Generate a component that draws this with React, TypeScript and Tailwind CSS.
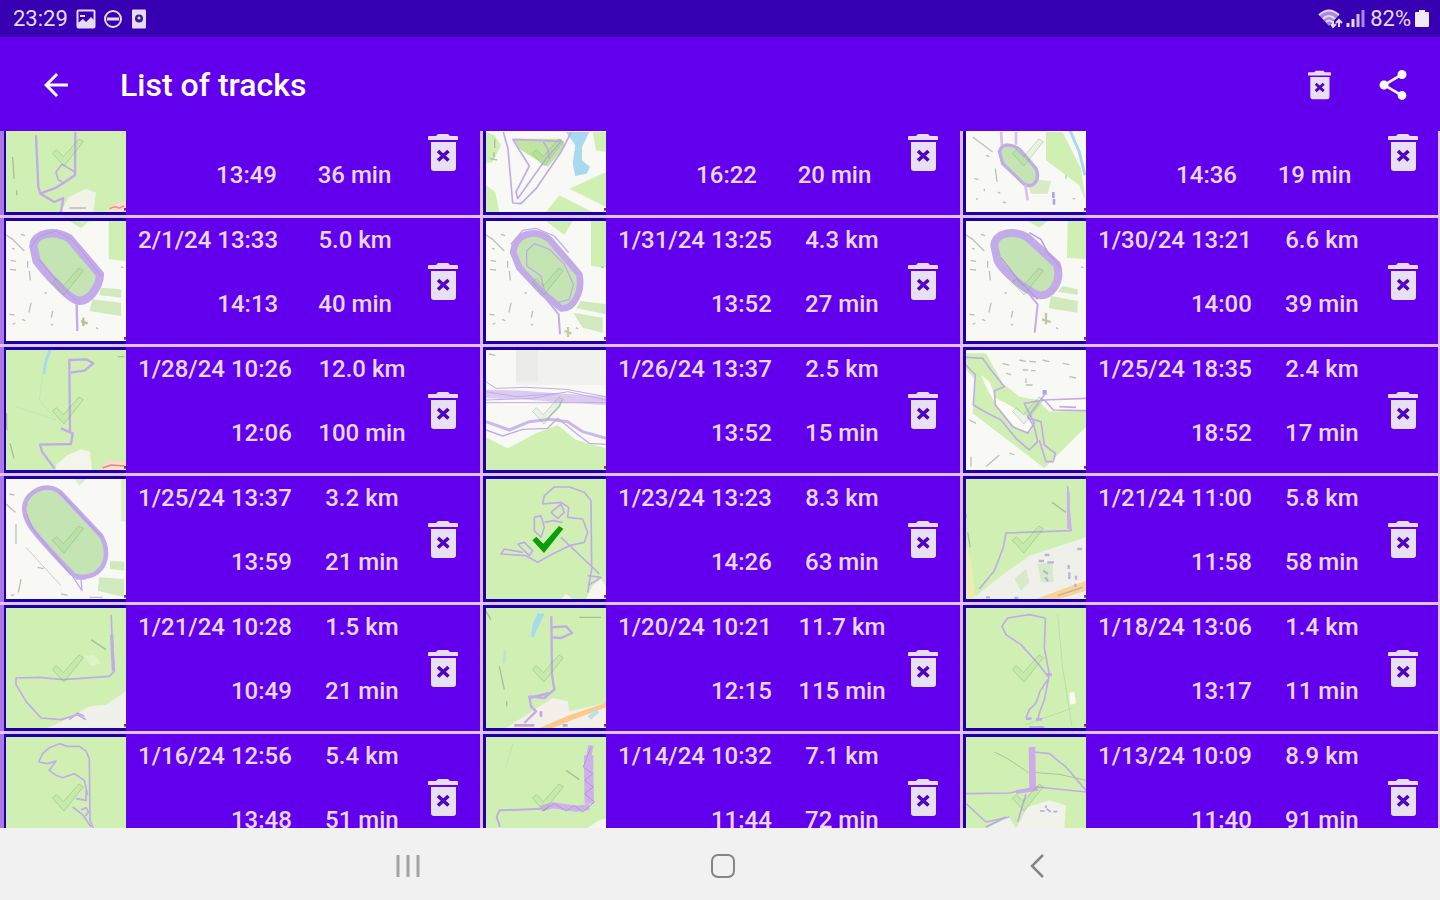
import React from 'react'
import { MdArrowBack, MdShare } from 'react-icons/md'

type Patch = { d: string; fill: string }
type Line = { d: string; w?: number; color?: string; fill?: string }
type TrackMap = { land: string; patches?: Patch[]; marks?: string; lines: Line[] }
type Track = {
    start?: string
    end: string
    distance?: string
    duration: string
    selected?: boolean
    map: TrackMap
}

const GREEN = '#cff0b2'
const PAPER = '#f8f9f4'
const FIELD = '#c4e5b3'
const WATER = '#a9d9ee'
const ROAD = '#f8d49a'

const stadiumMarks =
    'M0 42 L20 55 L55 90 M45 40l12 4 M18 82l8 2 M14 118l16 3 M12 145l18 2 M65 120v20 M70 150l3 28 M75 245l-6 30 M10 280l15 2 M48 295l10 4 M20 310l8-4 M115 215l8 2 M140 270l-4 20 M135 310l6 2 M270 320l6 4 M345 138l8 2'

const tracks: Track[] = [
    {
        end: '13:49',
        duration: '36 min',
        map: {
            land: GREEN,
            patches: [
                { d: 'M170 350 L188 315 L240 290 L270 302 L262 360 H165Z', fill: '#f1f2e8' },
                { d: 'M300 360 L325 335 L360 328 V360Z', fill: '#f9dfcf' },
            ],
            marks: 'M20 195 L24 260 M32 295v15 M190 348h50',
            lines: [
                { d: 'M90 130 L97 285 L103 305 L150 287 L207 250 L208 120', w: 7 },
                { d: 'M207 240 L168 217 L150 240 L156 262 L175 275' },
                { d: 'M103 305 L145 330 L172 318 L165 360', w: 7 },
                { d: 'M310 350 L325 344 L340 348 L355 342', color: '#e29a8a' },
            ],
        },
    },
    {
        end: '16:22',
        duration: '20 min',
        map: {
            land: PAPER,
            patches: [
                { d: 'M0 120 L25 130 L45 160 L20 210 L0 215Z M0 280 L28 300 L40 360 H0Z', fill: GREEN },
                { d: 'M80 140 L225 140 L240 160 L185 225 L100 170Z', fill: '#bfe5a0' },
                { d: 'M240 120 L310 120 L288 165 L288 205 L312 225 L302 245 L268 252 L260 215 L268 160Z', fill: WATER },
                { d: 'M320 120 H360 V180 L330 175Z M250 290 L360 240 V345Z M180 360 L220 310 L320 360Z', fill: GREEN },
            ],
            marks: 'M26 140v28 M24 180v16 M12 200l22 4',
            lines: [
                { d: 'M52 120 L66 170 L80 333 L105 335 L150 290 L225 180 L255 122' },
                { d: 'M80 142 L225 148 L180 200 L95 320 L90 300 L130 222 L80 142' },
                { d: 'M172 150 L185 170 L190 200' },
            ],
        },
    },
    {
        end: '14:36',
        duration: '19 min',
        map: {
            land: PAPER,
            patches: [
                { d: 'M240 120 H290 L345 230 L360 330 L340 280 L240 205Z', fill: GREEN },
                { d: 'M210 262 L255 268 L245 305 L195 305 L185 280Z', fill: '#d9eac4' },
            ],
            marks:
                'M20 135 L80 180 M88 230l5 40 M60 190l10 4 M25 260l12 2 M55 290v8 M30 320l6 2 M95 300l8 4 M110 330l10 2 M300 250v10 M320 320h8',
            lines: [
                { d: 'M310 110 L340 180 L357 250', w: 9, color: WATER },
                { d: 'M100 178 C108 150 145 155 168 180 L210 230 C225 265 200 290 175 277 L110 215Z', w: 10, fill: FIELD },
                { d: 'M105 120 L108 160 M150 120 L150 158 M178 278 L185 325', w: 8, color: '#d7bdf3' },
                { d: 'M262 300v18 M264 320v18', color: '#aaa6ee', w: 8 },
            ],
        },
    },
    {
        start: '2/1/24 13:33',
        end: '14:13',
        distance: '5.0 km',
        duration: '40 min',
        map: {
            land: PAPER,
            patches: [
                { d: 'M190 0 H250 L225 22Z M308 0 H360 V120 L308 115Z', fill: GREEN },
                { d: 'M260 235 L345 245 V285 L250 270Z M285 200 L345 205 V230 L280 222Z', fill: '#d1eabd' },
            ],
            marks: stadiumMarks,
            lines: [
                { d: 'M82 75 C85 35 145 25 190 52 L282 160 C280 200 245 250 210 237 C180 225 110 145 92 120Z', w: 25, fill: FIELD },
                { d: 'M74 80 L98 46 L150 30 L205 62 L285 165 M95 110 L160 190 L220 248', w: 3, color: '#b897e5' },
                { d: 'M212 250 L214 330', w: 7 },
                { d: 'M225 300l20 8 M232 290v25', w: 7, color: '#b9bf8b' },
            ],
        },
    },
    {
        start: '1/31/24 13:25',
        end: '13:52',
        distance: '4.3 km',
        duration: '27 min',
        map: {
            land: PAPER,
            patches: [
                { d: 'M180 0 H260 L235 42Z M315 0 H360 V140 L315 135Z', fill: GREEN },
                { d: 'M285 240 L360 250 V280 L270 262Z M262 275 L350 290 V335 L290 320Z', fill: '#d1eabd' },
            ],
            marks: stadiumMarks,
            lines: [
                { d: 'M82 95 C85 40 145 20 190 55 L280 160 C290 210 265 265 225 262 L170 215 L100 140Z', w: 20, fill: FIELD },
                { d: 'M74 70 L110 28 L150 22 L205 45 L248 95', w: 4 },
                { d: 'M178 220 L165 165 L122 135 L122 90 L145 68 L190 85 L235 130 L262 190 L250 235 L215 245 L178 220', w: 4 },
                { d: 'M170 220 L218 280 L222 340', w: 6 },
                { d: 'M235 330l22 8 M246 318v30', w: 7, color: '#c8cda4' },
            ],
        },
    },
    {
        start: '1/30/24 13:21',
        end: '14:00',
        distance: '6.6 km',
        duration: '39 min',
        map: {
            land: PAPER,
            patches: [
                { d: 'M185 0 H245 L220 20Z M305 0 H360 V115 L303 110Z', fill: GREEN },
                { d: 'M255 225 L335 240 V275 L248 262Z M290 195 L335 205 V222 L275 212Z', fill: '#d1eabd' },
            ],
            marks: stadiumMarks,
            lines: [
                { d: 'M85 75 C85 35 145 25 185 50 L272 130 C290 180 255 230 218 222 C180 210 110 150 95 120Z', w: 24, fill: FIELD },
                { d: 'M190 35 L225 55 L245 95 L285 140 M105 110 L160 180 L215 235', w: 4, color: '#b897e5' },
                { d: 'M190 220 L215 250 L206 335', w: 6 },
                { d: 'M228 295l26 8 M240 275v35', w: 7, color: '#c1c99b' },
            ],
        },
    },
    {
        start: '1/28/24 10:26',
        end: '12:06',
        distance: '12.0 km',
        duration: '100 min',
        map: {
            land: GREEN,
            patches: [
                { d: 'M150 345 L185 315 L225 298 L252 305 L258 360 H150Z', fill: '#f3f4ea' },
                { d: 'M280 360 L310 330 L360 335 V360Z', fill: '#fadccb' },
            ],
            marks: 'M2 190v50 M12 280l12 45 M335 20h20',
            lines: [
                { d: 'M132 0 L118 40 L114 72', w: 9, color: WATER },
                { d: 'M110 70 L100 150 L150 210 L30 170', w: 2, color: '#bfe0b8' },
                { d: 'M192 250 L190 30 L240 28 L262 40 L235 62 L195 68', w: 7 },
                { d: 'M165 235 L200 250 L195 282 L102 284 L108 305 L145 355', w: 7 },
                { d: 'M290 354 L315 345 L355 348', color: '#d98e80' },
            ],
        },
    },
    {
        start: '1/26/24 13:37',
        end: '13:52',
        distance: '2.5 km',
        duration: '15 min',
        map: {
            land: PAPER,
            patches: [
                { d: 'M90 0 H360 V105 H90Z', fill: '#f1f1ee' },
                { d: 'M90 0 H155 V95 H90Z', fill: '#ebebe8' },
                { d: 'M0 262 L65 295 L150 250 L215 225 L270 270 L360 295 V360 H0Z', fill: GREEN },
            ],
            marks: 'M8 12l20 4',
            lines: [
                { d: 'M0 132 L110 135 L200 142 L360 152', w: 26, color: '#dccbf0' },
                { d: 'M0 95 L30 115 L120 112 L240 118 L360 140 M0 150 L140 145 L245 125 L360 150 M0 158 H360 M0 125 L90 140 L220 130', w: 3 },
                { d: 'M0 215 L70 240 L130 215 L190 208 L245 215 L290 245 L360 265', w: 9, color: '#ccb6ee' },
                { d: 'M0 240 L50 258 L110 238 L185 235 L215 205 L270 250 L310 280 L360 283', w: 4 },
                { d: 'M180 210 L220 170 L228 150', w: 4, color: '#b5bfc4' },
            ],
        },
    },
    {
        start: '1/25/24 18:35',
        end: '18:52',
        distance: '2.4 km',
        duration: '17 min',
        map: {
            land: PAPER,
            patches: [
                { d: 'M0 10 L60 10 L110 100 L160 140 L215 150 L250 185 L360 180 V230 L235 355 L20 190 L30 90 L0 60Z', fill: GREEN },
                { d: 'M45 75 L70 95 L90 145 L130 165 L200 210 L195 245 L150 235 L95 170 L65 120Z', fill: '#fbfbf8' },
                { d: 'M245 150 L360 148 V180 L270 180Z', fill: '#fbfbf8' },
            ],
            marks:
                'M160 30l20 4 M190 34l20 2 M170 60h16 M195 62h14 M180 85v14 M230 30l20 5 M110 40l20 6 M290 40l20 4 M310 80l20 4 M180 105h20 M120 70l15 4 M60 350l40-35 M10 210l20 10 M15 320v30 M130 310l15 4',
            lines: [
                { d: 'M0 22 L50 25 L75 60 L115 110 L85 122 L88 165 L140 230 L185 250 L205 220 L175 160 L235 150 L360 145', w: 5 },
                { d: 'M0 45 L28 75 L22 165 L65 190 L105 210 L150 265 L190 300 L215 275 L205 230 L185 200 L235 135', w: 5 },
                { d: 'M190 205 L225 215 L235 285 L268 310 L262 335 L240 335 L220 270', w: 5 },
                { d: 'M235 150 L262 180 L360 182 M280 170 L330 172', w: 5 },
                { d: 'M236 120v14', w: 12, color: '#aaa0ec' },
            ],
        },
    },
    {
        start: '1/25/24 13:37',
        end: '13:59',
        distance: '3.2 km',
        duration: '21 min',
        map: {
            land: PAPER,
            patches: [
                { d: 'M205 0 H240 L220 20Z M345 0 H360 V130 L345 125Z', fill: '#dcefcc' },
                { d: 'M280 295 L355 300 V355 L275 335Z M312 245 L355 248 V275 L312 270Z', fill: '#d1eabd' },
            ],
            marks:
                'M0 75 L28 100 M30 135v60 M10 45l15 3 M95 265l18 4 M45 300l-8 40 M15 350l10-4 M165 345l20 4 M250 355h40',
            lines: [
                { d: 'M60 205 L165 320', w: 3, color: '#c9ccc6' },
                { d: 'M55 85 C60 35 125 5 165 42 L285 170 C325 240 280 310 205 290 C175 260 100 180 75 145 C58 120 54 105 55 85Z', w: 14, fill: FIELD },
                { d: 'M62 105 L80 150 L195 288 M160 38 L288 175', w: 3, color: '#b493e6' },
                { d: 'M200 292 L228 335 L225 300 M210 300 L240 300', w: 4 },
            ],
        },
    },
    {
        start: '1/23/24 13:23',
        end: '14:26',
        distance: '8.3 km',
        duration: '63 min',
        selected: true,
        map: {
            land: GREEN,
            patches: [{ d: 'M300 360 L320 320 L345 300 L360 320 V360Z M225 360 L240 345 L260 360Z', fill: '#f6f6ee' }],
            lines: [
                { d: 'M170 75 L175 50 L205 24 L250 24 L295 40 L315 65 L317 270 L305 340 M170 75 L225 70 L248 85 L245 115 L290 120 L305 160 L295 190 L250 200 L200 225 L155 250 L120 230 L45 225 L55 210 L110 220', w: 5 },
                { d: 'M195 100 L225 75 L235 100 L215 118 L195 100 M145 115 L165 110 L175 145 L165 175 L145 155 L145 115 M175 130 L200 125 L230 130', w: 5 },
                { d: 'M95 195 L115 190 L140 215 L130 230 L95 195 M225 175 L325 270 L340 285 M305 290 L345 295 L305 320', w: 5 },
            ],
        },
    },
    {
        start: '1/21/24 11:00',
        end: '11:58',
        distance: '5.8 km',
        duration: '58 min',
        map: {
            land: GREEN,
            patches: [
                { d: 'M0 360 L10 345 L30 350 L100 295 L190 230 L360 175 V360Z', fill: '#eff0e9' },
                { d: 'M145 300 L180 270 L190 310 L165 335Z M215 255 L260 250 L262 310 L225 310Z', fill: '#d6e9c8' },
                { d: 'M210 360 L290 330 L360 305 V335 L280 360Z', fill: ROAD },
                { d: 'M0 200 L15 240 L28 360 H0Z', fill: '#eceeb0' },
            ],
            marks: 'M0 105v12 M5 160l8 45 M258 70 L300 100 M275 350 L350 325',
            lines: [
                { d: 'M305 20 L308 80 L315 155 L120 162 L112 205 L85 275 L40 330' },
                { d: 'M307 40 L308 150', w: 9, color: '#cdb0ea' },
                { d: 'M236 228h14 M218 246h16 M244 250h20 M334 210h14 M308 258v12 M310 280v20 M232 275l14 10 M238 295l8 12 M330 290v12 M328 314v10 M60 355h12 M145 357h12', color: '#b5b4e0', w: 7 },
            ],
        },
    },
    {
        start: '1/21/24 10:28',
        end: '10:49',
        distance: '1.5 km',
        duration: '21 min',
        map: {
            land: GREEN,
            patches: [
                { d: 'M125 360 L200 325 L250 295 L300 290 L360 250 V360Z', fill: '#f0f1ea' },
                { d: 'M235 145 L265 140 L285 165 L255 175Z', fill: '#dff2c8' },
            ],
            marks: 'M255 95 L300 125',
            lines: [
                { d: 'M316 20 L318 90 L325 190 L310 205 L170 215 L100 208 L30 210 L30 230 L60 280 L105 330 L165 335 L215 320 L240 335' },
                { d: 'M317 80 L322 190', w: 10 },
                { d: 'M190 335 L215 315 L235 325' },
            ],
        },
    },
    {
        start: '1/20/24 10:21',
        end: '12:15',
        distance: '11.7 km',
        duration: '115 min',
        map: {
            land: GREEN,
            patches: [
                { d: 'M155 15 L175 18 L155 60 L142 90 L135 85 L140 50Z', fill: WATER },
                { d: 'M60 360 L130 315 L200 270 L245 280 L250 310 L360 285 V360Z', fill: '#f4efe9' },
                { d: 'M160 360 L250 322 L360 284 V298 L260 335 L200 360Z', fill: '#fbc98a' },
            ],
            marks: 'M40 175 L55 245 M62 280v15 M280 28h65 M0 10l15 25',
            lines: [
                { d: 'M57 125l-2 40', color: '#bfe3cf', w: 9 },
                { d: 'M196 25 L198 200 L205 245 L175 270 L130 265 L135 295 L150 310 L115 345', w: 7 },
                { d: 'M196 58 L240 55 L258 75 L225 90 L196 88 M130 270 L190 255', w: 7 },
                { d: 'M165 310v16 M85 352h60 M230 352h15', color: '#c5a6dc', w: 8 },
                { d: 'M310 330 L335 308', color: '#b9dfe8', w: 14 },
            ],
        },
    },
    {
        start: '1/18/24 13:06',
        end: '13:17',
        distance: '1.4 km',
        duration: '11 min',
        map: {
            land: GREEN,
            patches: [{ d: 'M310 255 L325 252 L330 285 L312 290Z', fill: '#fbfbf6' }],
            lines: [
                { d: 'M275 20 L290 180 L318 355 M180 350 L320 300', w: 3, color: '#bddcb0' },
                { d: 'M238 30 L190 20 L125 30 L108 55 L120 80 L165 110 L210 160 L250 210 M238 30 L235 120 L250 200 L242 240 L235 275 L222 310 L215 335 M180 330 L190 305 L210 285 L222 250 L245 215' },
                { d: 'M240 200h18 M180 332h16 M210 334h18 M190 358h45', w: 8 },
            ],
        },
    },
    {
        start: '1/16/24 12:56',
        end: '13:48',
        distance: '5.4 km',
        duration: '51 min',
        map: {
            land: GREEN,
            lines: [
                { d: 'M98 75 L110 50 L130 32 L160 20 L185 28 L220 28 L240 42 L250 65 L252 250 L262 275 M98 75 L125 80 L150 72 L130 100 L150 115 L170 122 L205 110 L235 130 L245 175' },
                { d: 'M200 210 L232 235 L255 270 M225 218 L240 212 L248 225 L238 238 M210 185 L240 190 L240 160', w: 5 },
            ],
        },
    },
    {
        start: '1/14/24 10:32',
        end: '11:44',
        distance: '7.1 km',
        duration: '72 min',
        map: {
            land: GREEN,
            patches: [{ d: 'M300 275 L340 250 L360 245 V290 H300Z', fill: '#f4f5ec' }],
            marks: 'M240 100 L280 128',
            lines: [
                { d: 'M60 90 L80 20', w: 2, color: '#bddcb0' },
                { d: 'M315 25 L308 60', w: 16, color: '#cfb0ec' },
                { d: 'M308 55 L308 100 L310 200', w: 28, color: '#cfb0ec' },
                { d: 'M310 210 L270 215 L200 205 L165 215', w: 18, color: '#cfb0ec' },
                { d: 'M315 30 L292 90 L320 110 L296 130 L322 150 L296 170 L325 195 L290 225 L265 205 L240 222 L205 200 L170 222', w: 3, color: '#b892e4' },
                { d: 'M165 215 L100 218 L40 220 L32 240 L42 270', w: 6 },
            ],
        },
    },
    {
        start: '1/13/24 10:09',
        end: '11:40',
        distance: '8.9 km',
        duration: '91 min',
        map: {
            land: GREEN,
            patches: [{ d: 'M150 275 L185 210 L250 190 L300 205 L295 275Z M60 275 L130 240 L150 275Z', fill: '#f1f2e9' }],
            lines: [
                { d: 'M85 45 L125 65 L185 105 L280 112 L360 130', w: 3, color: '#a9c3a4' },
                { d: 'M198 30 L200 160', w: 20, color: '#cfabe9' },
                { d: 'M150 165 L215 155', w: 12, color: '#cfabe9' },
                { d: 'M205 45 L250 50 L300 90 L360 160 M360 165 L215 150 L130 168 L0 170 M0 200 L60 255 L130 240 M180 170 L155 255' },
                { d: 'M222 222h14 M242 215l12 10 M262 224h12 M240 205v8 M60 270 L120 240', color: '#b9a9df' },
            ],
        },
    },
]

const CHECK = 'M139 184 L151 173 L172 194 L219 141 L232 149 L174 222Z'

const MapThumb = ({ map, selected }: { map: TrackMap; selected?: boolean }) => (
    <svg viewBox="0 0 360 360" className="block h-[120px] w-[120px]" aria-hidden="true">
        <rect width="360" height="360" fill={map.land} />
        {map.patches?.map((patch, index) => (
            <path key={index} d={patch.d} fill={patch.fill} />
        ))}
        {map.marks && <path d={map.marks} fill="none" stroke="#8d948a" strokeWidth="4" opacity="0.55" />}
        {map.lines.map((line, index) => (
            <path
                key={index}
                d={line.d}
                fill={line.fill ?? 'none'}
                stroke={line.color ?? '#c3abea'}
                strokeWidth={line.w ?? 5}
                strokeLinejoin="round"
            />
        ))}
        {selected ? (
            <path d={CHECK} fill="#0a9e0a" />
        ) : (
            <path d={CHECK} fill="#8cc880" fillOpacity="0.15" stroke="#5c9c58" strokeOpacity="0.3" strokeWidth="3" />
        )}
        <rect x="354" y="348" width="6" height="8" fill="#8a2a66" />
    </svg>
)

const TrashIcon = ({ className }: { className: string }) => (
    <svg viewBox="0 0 30 37" className={className} aria-hidden="true">
        <path d="M8 2 L10 0 H20 L22 2 H29 Q30 2 30 3 V6 H0 V3 Q0 2 1 2Z" fill="#e9dcfa" />
        <path d="M3 8 H28 V34 Q28 37 25 37 H6 Q3 37 3 34Z" fill="#e6e0f2" />
        <path d="M10 17 L20.500 26.500 M20.500 17 L10 26.500" stroke="#5200c8" strokeWidth="3.600" />
    </svg>
)

const StatusBar = () => (
    <div className="flex h-[37px] shrink-0 items-center justify-between bg-[#3700b3] pt-px pr-[11px] pl-[13px] text-[22px] leading-6 text-[#e6dcfa]">
        <div className="flex items-center">
            <span>23:29</span>
            <svg viewBox="0 0 20 20" className="ml-2 h-5 w-5" aria-hidden="true">
                <rect x="1.500" y="1.500" width="17" height="17" rx="1" fill="none" stroke="#e6dcfa" strokeWidth="2" />
                <path d="M2 18 V14 L7 10 L10 13 L15 8 L18 11 V18Z" fill="#e6dcfa" />
                <path d="M4 7h5" stroke="#e6dcfa" strokeWidth="2" />
            </svg>
            <svg viewBox="0 0 20 20" className="ml-[7px] h-5 w-5" aria-hidden="true">
                <circle cx="10" cy="10" r="8" fill="none" stroke="#e6dcfa" strokeWidth="2" />
                <path d="M4 10h12" stroke="#e6dcfa" strokeWidth="3" />
            </svg>
            <svg viewBox="0 0 16 20" className="ml-2 h-5 w-4" aria-hidden="true">
                <rect x="1" y="0.500" width="14" height="19" rx="1" fill="#e6dcfa" />
                <circle cx="8" cy="9.500" r="4" fill="#3a1a9a" />
                <circle cx="8" cy="9" r="1.500" fill="#e6dcfa" />
            </svg>
        </div>
        <div className="flex items-center">
            <svg viewBox="0 0 26 20" className="h-5 w-[26px]" aria-hidden="true">
                <path d="M1 6 Q11 -3 21 6 L11 17Z" fill="#a68be0" />
                <path d="M1 6 Q11 -3 21 6 M5 10 Q11 4 17 10 M8 13 Q11 10 14 13" fill="none" stroke="#e6dcfa" strokeWidth="2" />
                <path d="M15 18 V12 M13 15 L15 18 L18 15 M21 11 V18 M18 14 L21 11 L24 14" fill="none" stroke="#e6dcfa" strokeWidth="2" />
            </svg>
            <svg viewBox="0 0 20 20" className="ml-[2px] h-5 w-5" aria-hidden="true">
                <path d="M2 18v-4 M7 18v-8" stroke="#e6dcfa" strokeWidth="3" />
                <path d="M12 18V5" stroke="#cdbcf0" strokeWidth="3" />
                <path d="M17 18V1" stroke="#a68be0" strokeWidth="3" />
            </svg>
            <span className="ml-1">82%</span>
            <svg viewBox="0 0 14 20" className="ml-1 h-5 w-[14px]" aria-hidden="true">
                <path d="M4 1h6v2h3q1 0 1 1v13q0 1-1 1H1q-1 0-1-1V4q0-1 1-1h3z" fill="#f1eafc" />
            </svg>
        </div>
    </div>
)

const TrackCell = ({ track, index }: { track: Track; index: number }) => {
    const column = index % 3
    return (
        <li className={`flex h-[129px] border-t-[3px] border-[#e2c2ff] ${column === 2 ? 'border-r-2' : ''}`}>
            <div className={`w-[126px] shrink-0 ${column === 0 ? 'border-l-[4px] border-[#ab78e4]' : 'border-l-[3px] border-[#dcb8ff]'}`}>
                <div className="flex h-full items-center justify-end bg-[#1c00a6]">
                    <MapThumb map={track.map} selected={track.selected} />
                </div>
            </div>
            <div className="ml-3 flex min-w-[139px] flex-col justify-end gap-8 pb-6 text-right">
                {track.start && <span>{track.start}</span>}
                <span>{track.end}</span>
            </div>
            <div className="ml-1 flex flex-1 flex-col justify-end gap-8 pb-6 text-center">
                {track.distance && <span>{track.distance}</span>}
                <span>{track.duration}</span>
            </div>
            <button
                type="button"
                aria-label="Delete track"
                className={`flex shrink-0 items-center ${column === 2 ? 'mr-5' : 'mr-[22px]'}`}
            >
                <TrashIcon className="h-[37px] w-[30px]" />
            </button>
        </li>
    )
}

const App = () => {
    return (
        <div className="flex h-screen flex-col overflow-hidden bg-[#6200ee] font-['Roboto',sans-serif]">
            <StatusBar />
            <header className="flex h-[94px] shrink-0 items-center pt-0.5 pr-[29px] pl-[38px] text-white">
                <button type="button" aria-label="Back">
                    <MdArrowBack size={36} />
                </button>
                <h1 className="ml-[46px] flex-1 text-[32px] leading-9 font-medium">List of tracks</h1>
                <button type="button" aria-label="Delete all tracks">
                    <TrashIcon className="h-[30px] w-[23px]" />
                </button>
                <button type="button" aria-label="Share" className="ml-11">
                    <MdShare size={36} />
                </button>
            </header>

            <main className="min-h-0 flex-1 overflow-hidden">
                <ul className="-mt-[45px] grid grid-cols-3 text-[24px] leading-8 font-medium text-[#e8d8ff]">
                    {tracks.map((track, index) => (
                        <TrackCell key={index} track={track} index={index} />
                    ))}
                </ul>
            </main>

            <nav className="flex h-[72px] shrink-0 items-center justify-center gap-[291px] bg-[#f1f1f1] pt-1 pl-[6px] text-[#858585]">
                <button type="button" aria-label="Recent apps">
                    <svg viewBox="0 0 24 24" className="h-6 w-6" fill="none" stroke="#a3a3a3" strokeWidth="3">
                        <path d="M2 1v22 M12 1v22 M22 1v22" />
                    </svg>
                </button>
                <button type="button" aria-label="Home">
                    <svg viewBox="0 0 24 24" className="h-6 w-6" fill="none" stroke="currentColor" strokeWidth="2">
                        <rect x="1" y="1" width="22" height="22" rx="6" />
                    </svg>
                </button>
                <button type="button" aria-label="Back to previous app">
                    <svg viewBox="0 0 24 24" className="h-6 w-6" fill="none" stroke="currentColor" strokeWidth="2.500">
                        <path d="M17 1 L6 12 L17 23" />
                    </svg>
                </button>
            </nav>
        </div>
    )
}

export default App
